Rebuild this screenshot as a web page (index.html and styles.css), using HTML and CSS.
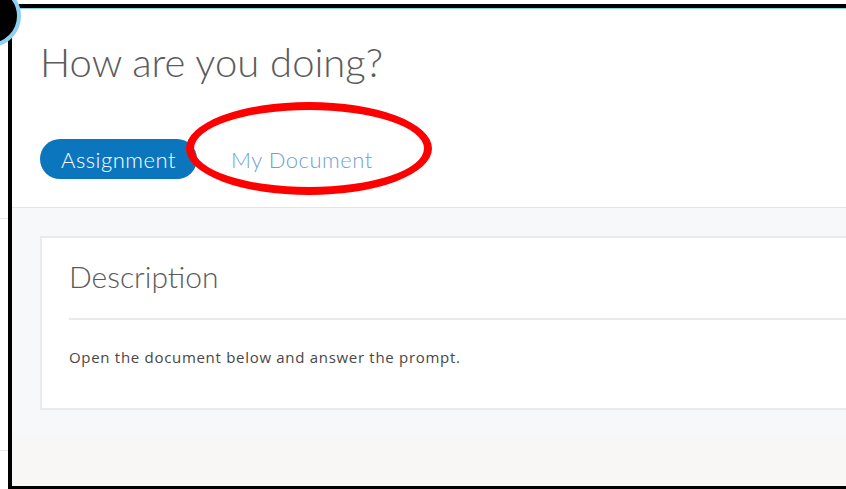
FILE: index.html
```html
<!DOCTYPE html>
<html lang="en">
<head>
<meta charset="utf-8">
<title>How are you doing?</title>
<link rel="stylesheet" href="styles.css">
</head>
<body>
<div class="screen">
  <div class="side">
    <span class="side-rule upper"></span>
    <span class="side-rule lower"></span>
  </div>
  <div class="frame">
    <div class="page">
      <header class="head">
        <h1 class="title">How are you doing?</h1>
        <nav class="tabs">
          <a class="tab active">Assignment</a>
          <a class="tab">My Document</a>
        </nav>
      </header>
      <main class="content">
        <section class="card">
          <h2 class="card-title">Description</h2>
          <p class="card-text">Open the document below and answer the prompt.</p>
        </section>
      </main>
      <div class="foot"></div>
    </div>
  </div>
  <span class="avatar"></span>
  <span class="marker"></span>
</div>
</body>
</html>
```

FILE: styles.css
```css
* { box-sizing: border-box; }

html, body {
  margin: 0;
  padding: 0;
  background: #fff;
}

.screen {
  position: relative;
  width: 846px;
  height: 489px;
  overflow: hidden;
  display: flex;
  padding-top: 4px;
  background: #fff;
}

/* narrow strip left of the window */
.side {
  position: relative;
  width: 8px;
  flex: none;
  margin-top: -4px;
  background: #fff;
}
.side-rule {
  position: absolute;
  left: 0;
  right: 0;
  height: 1px;
  background: #e9e9e9;
}
.side-rule.upper { top: 218px; }
.side-rule.lower { top: 450px; }

.frame {
  flex: 1;
  min-width: 0;
  border-top: 4px solid #000;
  border-left: 4px solid #000;
  border-bottom: 3px solid #000;
  display: flex;
  flex-direction: column;
}

.page {
  flex: 1;
  width: 900px;
  display: flex;
  flex-direction: column;
  border-top: 1px solid #8fcdef;
}

.head {
  background: #fff;
  padding: 28px 28px 28px;
  border-bottom: 1px solid #e4e5e7;
}

.title {
  margin: 0;
  font-family: "Lato", "Open Sans", sans-serif;
  font-weight: 300;
  font-size: 40px;
  line-height: 50px;
  color: #5b5b5b;
}

.tabs {
  display: flex;
  gap: 13px;
  margin-top: 52px;
}

.tab {
  display: flex;
  align-items: center;
  height: 40px;
  padding: 0 21px 0 21px;
  border-radius: 20px;
  font-family: "Lato", "Open Sans", sans-serif;
  font-weight: 300;
  font-size: 22px;
  letter-spacing: 0.5px;
  color: #6f9fd6;
}

.tab.active {
  background: #0b76bd;
  color: #fff;
}

.content {
  background: #f7f8fa;
  padding: 28px 0 27px 28px;
}

.card {
  background: #fff;
  border: 2px solid #eaeaea;
  padding: 0 0 0 27px;
}

.card-title {
  margin: 0;
  padding: 20px 0 24px;
  font-family: "Lato", "Open Sans", sans-serif;
  font-weight: 300;
  font-size: 30px;
  line-height: 36px;
  color: #5a5a5a;
  border-bottom: 2px solid #e9e9e9;
}

.card-text {
  margin: 0;
  padding: 27px 0 41px 0;
  font-family: "Open Sans", sans-serif;
  font-size: 15px;
  line-height: 20px;
  letter-spacing: 0.7px;
  color: #474747;
}

.foot {
  flex: 1;
  background: #f8f7f5;
}

/* round badge peeking in at the top-left corner */
.avatar {
  position: absolute;
  left: -41px;
  top: -15px;
  width: 62px;
  height: 62px;
  border-radius: 50%;
  background: #000;
  border: 4px solid #8dd0f3;
}

/* hand-drawn highlight around the second tab */
.marker {
  position: absolute;
  left: 186px;
  top: 102px;
  width: 246px;
  height: 93px;
  border: 8px solid #f00;
  border-radius: 50%;
}
```
